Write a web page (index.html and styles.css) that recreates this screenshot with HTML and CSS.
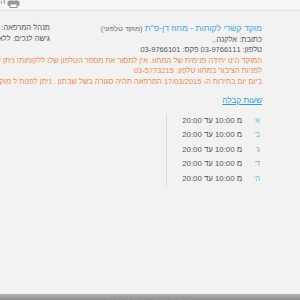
FILE: index.html
```html
<!DOCTYPE html>
<html lang="he" dir="rtl">
<head>
    <meta charset="UTF-8">
    <title>מוקד קשרי לקוחות</title>
    <link rel="stylesheet" href="styles.css">
</head>
<body>
    <div class="toolbar">
        <a class="print" href="#">
            <svg class="print-icon" width="13" height="8" viewBox="0 0 13 8">
                <rect x="3" y="-3" width="7" height="4" fill="#fff" stroke="#999" stroke-width="1"/>
                <rect x="0.5" y="1" width="12" height="5" rx="1" fill="#9a9a9a"/>
                <rect x="3" y="4" width="7" height="3.5" fill="#fff" stroke="#999" stroke-width="1"/>
            </svg>
            <span>הדפס</span>
        </a>
    </div>

    <div class="page">
        <div class="clinic">
            <div class="details">
                <div class="title"><a href="#">מוקד קשרי לקוחות - מחוז דן-פ"ת</a> <span class="kind">(מוקד טלפוני)</span></div>
                <div class="line">כתובת: אלקנה.,</div>
                <div class="line">טלפון: 03-9766111 פקס: 03-9766101</div>
                <div class="notice">המוקד הינו יחידה פנימית של המחוז. אין למסור את מספר הטלפון שלו ללקוחות! ניתן לפנות למוקד</div>
                <div class="notice">לפניות הציבור במחוז טלפון: 03-5773215</div>
                <div class="notice">ביום יום בחירות ה- 17/03/2015 המרפאה תהיה סגורה בשל שבתון . ניתן לפנות ל מוקד החירום</div>

                <a class="hours-link" href="#">שעות קבלה</a>
                <div class="hours">
                    <div class="row"><span class="day">א'</span><span class="time">מ 10:00 עד 20:00</span></div>
                    <div class="row"><span class="day">ב'</span><span class="time">מ 10:00 עד 20:00</span></div>
                    <div class="row"><span class="day">ג'</span><span class="time">מ 10:00 עד 20:00</span></div>
                    <div class="row"><span class="day">ד'</span><span class="time">מ 10:00 עד 20:00</span></div>
                    <div class="row"><span class="day">ה'</span><span class="time">מ 10:00 עד 20:00</span></div>
                </div>
            </div>
            <div class="manager">
                <div class="line">מנהל המרפאה:</div>
                <div class="line">גישה לנכים: ללא</div>
            </div>
        </div>
    </div>

    <div class="footer">00:00 עד 00:00 &nbsp; 00:00 עד 00:00</div>
</body>
</html>
```

FILE: styles.css
```css
html, body {
    height: 100%;
}
body {
    margin: 0;
    background-color: #f2f2f2;
    font-family: "Liberation Sans", Arial, sans-serif;
    font-size: 7.5px;
    color: #555;
    display: flex;
    flex-direction: column;
    overflow: hidden;
}
a {
    text-decoration: none;
}
.toolbar {
    height: 10px;
    background-color: #f6f6f6;
    border-bottom: 1px solid #e2e2e2;
    display: flex;
    justify-content: flex-end;
    overflow: hidden;
}
.print {
    display: flex;
    align-items: flex-start;
    gap: 2px;
    margin-top: -3px;
    margin-left: -14px;
    color: #777;
    font-size: 8px;
    line-height: 9px;
}
.print-icon {
    margin-top: 3px;
}
.page {
    flex: 1;
}
.clinic {
    display: flex;
    padding: 12px 38px 0 0;
    line-height: 10.5px;
}
.details {
    width: 212px;
    flex: none;
}
.manager {
    flex: none;
    white-space: nowrap;
}
.title {
    font-size: 8.6px;
    white-space: nowrap;
}
.title a {
    color: #45a8d8;
}
.kind {
    font-size: 7.3px;
    color: #666;
}
.line {
    white-space: nowrap;
}
.notice {
    color: #ec8a4e;
    white-space: nowrap;
}
.hours-link {
    display: inline-block;
    margin-top: 9px;
    font-size: 8.2px;
    line-height: 10px;
    color: #2f9ed6;
    text-decoration: underline;
}
.hours {
    width: 95px;
    margin-top: 7px;
    border-left: 1px solid #dcdcdc;
}
.row {
    display: flex;
    height: 14.6px;
    line-height: 14.6px;
}
.day {
    width: 18px;
    padding-right: 2px;
    color: #72b4dc;
}
.time {
    color: #555;
    font-size: 7.8px;
}
.footer {
    height: 6px;
    background: linear-gradient(#b4b4b4, #8c8c8c);
    color: #9e9e9e;
    font-size: 6px;
    line-height: 8px;
    text-align: center;
    overflow: hidden;
}
```
